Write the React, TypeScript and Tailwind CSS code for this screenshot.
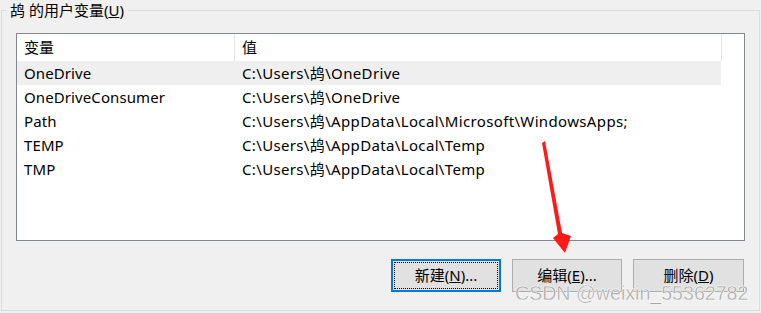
import React from "react";

const rows = [
  ["OneDrive", "C:\\Users\\鸪\\OneDrive"],
  ["OneDriveConsumer", "C:\\Users\\鸪\\OneDrive"],
  ["Path", "C:\\Users\\鸪\\AppData\\Local\\Microsoft\\WindowsApps;"],
  ["TEMP", "C:\\Users\\鸪\\AppData\\Local\\Temp"],
  ["TMP", "C:\\Users\\鸪\\AppData\\Local\\Temp"],
];

const font = {
  fontFamily: '"Noto Sans", "Noto Sans CJK SC", sans-serif',
};

export default function App() {
  return (
    <div
      className="relative w-[761px] h-[313px] overflow-hidden bg-[#f0f0f0] text-[15px] text-black pt-[10px] pl-[1px]"
      style={font}
    >
      <div className="relative w-[759px] h-[301px] border border-[#dcdcdc] flex flex-col">
        <div className="absolute left-[4px] top-[-11px] bg-[#f0f0f0] px-[4px] leading-[20px]">
          鸪 的用户变量(<span className="underline">U</span>)
        </div>
        <div className="ml-[14px] mt-[22px] w-[729px] h-[208px] border border-[#828790] bg-white">
          <div className="flex w-[705px] h-[27px] items-center">
            <div className="w-[217px] pl-[7px] h-full flex items-center">变量</div>
            <div className="w-px h-full bg-[#e5e5e5]" />
            <div className="flex-1 pl-[7px] h-full flex items-center">值</div>
            <div className="w-px h-full bg-[#e5e5e5]" />
          </div>
          {rows.map(([k, v], i) => (
            <div
              key={k}
              className={`flex w-[704px] h-[24px] items-center ${i === 0 ? "bg-[#efefef]" : ""}`}
            >
              <div className="w-[218px] pl-[7px] whitespace-nowrap tracking-[0.1px]">{k}</div>
              <div className="flex-1 pl-[7px] whitespace-nowrap tracking-[0.35px]">{v}</div>
            </div>
          ))}
        </div>
        <div className="flex justify-end gap-[11px] mt-[18px] pr-[15px]">
          <button className="w-[110px] h-[33px] border-2 border-[#0078d7] bg-[#e1e1e1] p-[1px]">
            <div className="w-full h-full border border-dotted border-black flex items-center justify-center">
              新建(<span className="underline">N</span>)...
            </div>
          </button>
          <button className="w-[110px] h-[33px] border border-[#adadad] bg-[#e1e1e1] flex items-center justify-center">
            编辑(<span className="underline">E</span>)...
          </button>
          <button className="w-[111px] h-[33px] border border-[#adadad] bg-[#e1e1e1] flex items-center justify-center">
            删除(<span className="underline">D</span>)
          </button>
        </div>
      </div>

      <svg className="absolute left-0 top-0 pointer-events-none" width="761" height="313">
        <polygon
          points="542,143 545,141 562,233 571,236 565,253 553,238 558,234"
          fill="#ff1a1a"
        />
      </svg>

      <div
        className="absolute left-[515px] top-[281px] text-[19.6px] leading-[24px] text-[#a8a8a8] whitespace-nowrap pointer-events-none"
        style={{
          fontFamily: '"Liberation Sans", Arial, sans-serif',
          WebkitTextStroke: "0.3px #ffffff",
          textShadow: "0 0 1px #fff, 0 0 1px #fff",
        }}
      >
        CSDN @weixin_55362782
      </div>
    </div>
  );
}
